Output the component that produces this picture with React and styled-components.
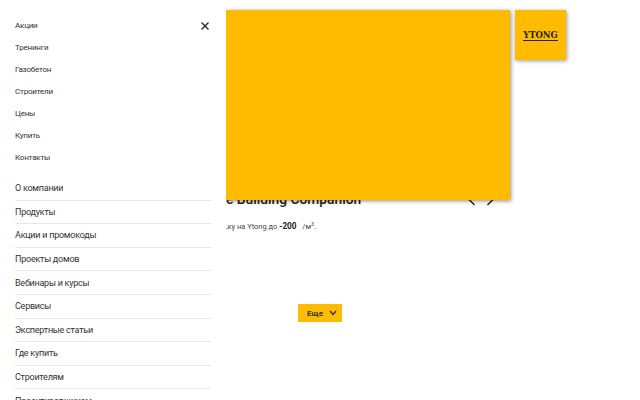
import React from "react";
import styled, { createGlobalStyle } from "styled-components";

const Global = createGlobalStyle`
  html, body { margin: 0; padding: 0; height: 400px; overflow: hidden; background: #fff; }
  body { font-family: Roboto, "Liberation Sans", sans-serif; color: #222; }
  * { box-sizing: border-box; }
`;

const Page = styled.div`
  position: relative;
  display: flex;
  width: 640px;
  height: 400px;
  overflow: hidden;
`;

const Drawer = styled.aside`
  flex: 0 0 226px;
  height: 400px;
  padding: 14px 15px 0;
  background: #fff;
  position: relative;
  z-index: 2;
`;

const CloseButton = styled.button`
  position: absolute;
  top: 21px;
  left: 200px;
  width: 10px;
  height: 10px;
  padding: 0;
  border: 0;
  background: none;
  display: flex;
`;

const TopList = styled.nav`
  display: flex;
  flex-direction: column;
  margin-bottom: 8px;
`;

const TopLink = styled.a`
  height: 22px;
  display: flex;
  align-items: center;
  padding-top: 1px;
  font-size: 8px;
  letter-spacing: -0.2px;
  color: #333;
`;

const MainList = styled.nav`
  display: flex;
  flex-direction: column;
  width: 196px;
  padding-top: 1px;
`;

const MainLink = styled.a`
  height: 23.6px;
  display: flex;
  align-items: center;
  flex: none;
  font-size: 9px;
  letter-spacing: -0.24px;
  color: #333;
  border-bottom: 1px solid #e6e6e6;
`;

const Content = styled.main`
  flex: 1;
  padding-top: 186px;
  position: relative;
`;

const HeadingRow = styled.div`
  display: flex;
  align-items: center;
  height: 26px;
  width: 284px;
  justify-content: space-between;
  padding-right: 16px;
`;

const Heading = styled.h2`
  margin: 0;
  font-size: 13.8px;
  font-weight: 500;
  white-space: nowrap;
  color: #222;
`;

const Arrows = styled.div`
  display: flex;
  gap: 10px;
  align-items: center;
  margin-top: 2px;
`;

const Promo = styled.p`
  margin: 8px 0 0;
  font-size: 7.5px;
  line-height: 12px;
  color: #444;
  white-space: nowrap;
  sup { font-size: 5.5px; line-height: 0; }
`;

const Price = styled.b`
  color: #222;
  font-weight: 700;
  font-size: 8.2px;
  margin-right: 4px;
`;

const MoreButton = styled.button`
  display: flex;
  align-items: center;
  justify-content: center;
  gap: 6px;
  width: 44px;
  height: 18px;
  margin: 71px 0 0 72px;
  padding: 0 0 0 4px;
  border: 0;
  background: #ffbb00;
  font-family: inherit;
  font-size: 8px;
  font-weight: 700;
  color: #333;
`;

const Panel = styled.div`
  position: absolute;
  left: 226px;
  top: 10px;
  width: 284px;
  height: 190px;
  background: #ffbb00;
  box-shadow: 1px 1px 4px rgba(0, 0, 0, 0.45);
`;

const Tile = styled.div`
  position: absolute;
  left: 515px;
  top: 10px;
  width: 51px;
  height: 50px;
  background: #ffbb00;
  box-shadow: 1px 1px 4px rgba(0, 0, 0, 0.4);
  display: flex;
  align-items: center;
  justify-content: center;
`;

const Logo = styled.span`
  font-family: "DejaVu Serif Condensed", "DejaVu Serif", serif;
  font-weight: 700;
  font-size: 9.4px;
  color: #222;
  border-bottom: 1px solid #222;
  line-height: 11px;
  margin-top: -1px;
`;

const top = ["Акции", "Тренинги", "Газобетон", "Строители", "Цены", "Купить", "Контакты"];
const main = [
  "О компании", "Продукты", "Акции и промокоды", "Проекты домов", "Вебинары и курсы",
  "Сервисы", "Экспертные статьи", "Где купить", "Строителям", "Проектировщикам",
];

export default function App() {
  return (
    <Page>
      <Global />
      <Drawer>
        <CloseButton aria-label="Закрыть">
          <svg width="10" height="10" viewBox="0 0 10 10">
            <path d="M1.5 1.5 8.5 8.5M8.5 1.5 1.5 8.5" stroke="#222" strokeWidth="1.3" fill="none" />
          </svg>
        </CloseButton>
        <TopList>
          {top.map((t) => <TopLink key={t}>{t}</TopLink>)}
        </TopList>
        <MainList>
          {main.map((t) => <MainLink key={t}>{t}</MainLink>)}
        </MainList>
      </Drawer>
      <Content>
        <HeadingRow>
          <Heading>e Building Companion</Heading>
          <Arrows>
            <svg width="8" height="12" viewBox="0 0 8 12">
              <path d="M6.5 1 1.5 6l5 5" stroke="#222" strokeWidth="1.5" fill="none" />
            </svg>
            <svg width="8" height="12" viewBox="0 0 8 12">
              <path d="M1.5 1 6.5 6l-5 5" stroke="#222" strokeWidth="1.5" fill="none" />
            </svg>
          </Arrows>
        </HeadingRow>
        <Promo>
          ,ку на Ytong до <Price>-200</Price> /м<sup>3</sup>.
        </Promo>
        <MoreButton>
          Еще
          <svg width="8" height="6" viewBox="0 0 8 6">
            <path d="M1 1l3 3.4L7 1" stroke="#333" strokeWidth="1.4" fill="none" />
          </svg>
        </MoreButton>
      </Content>
      <Panel />
      <Tile><Logo>YTONG</Logo></Tile>
    </Page>
  );
}
